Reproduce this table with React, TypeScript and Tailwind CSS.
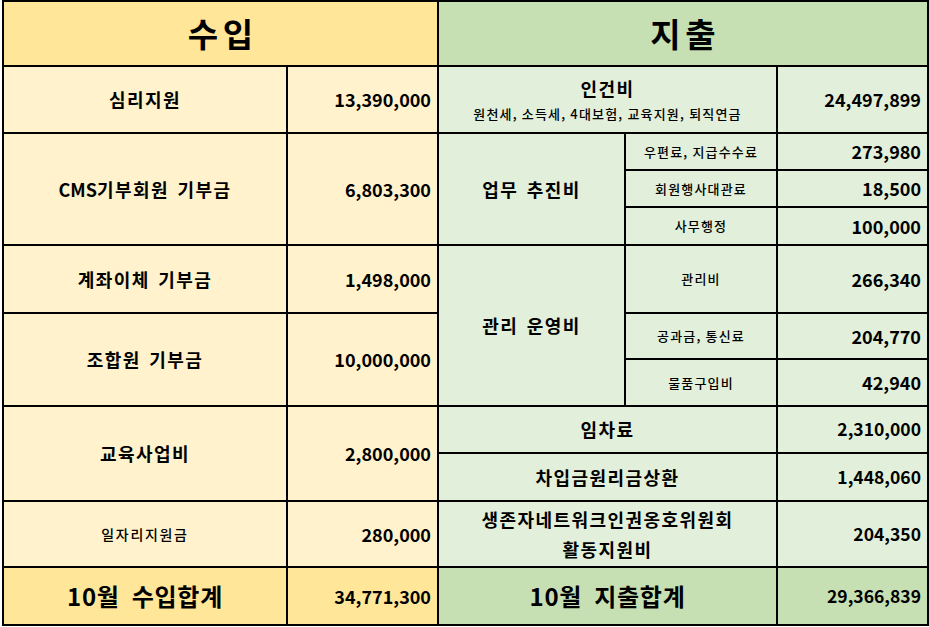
const Y_HEAD = 'bg-[#ffe699]';
const Y_BODY = 'bg-[#fff2cc]';
const G_HEAD = 'bg-[#c6e0b4]';
const G_BODY = 'bg-[#e2efda]';

const LABEL = 'text-[18px] font-bold tracking-[0.08em] [word-spacing:3px]';
const NUM = 'text-[18px] font-bold';
const SMALL = 'text-[13px] font-medium tracking-[0.09em]';

function Cell({
  className,
  children,
  right = false,
}: {
  className: string;
  children?: React.ReactNode;
  right?: boolean;
}) {
  return (
    <div
      className={`flex items-center ${right ? 'justify-end pr-[6px]' : 'justify-center'} text-black ${className}`}
    >
      {children}
    </div>
  );
}

export default function App() {
  return (
    <div className="w-[929px] h-[627px] bg-white">
      <div
        className="ml-[2px] w-[927px] bg-black p-[2px] grid gap-[2px] grid-cols-[282px_149px_185px_150px_149px] grid-rows-[63px_65px_35px_35px_36px_66px_44px_45px_45px_46px_64px_56px]"
        style={{ fontFamily: '"Noto Sans CJK KR", "Noto Sans", sans-serif' }}
      >
        {/* headers */}
        <Cell className={`${Y_HEAD} col-start-1 col-span-2 row-start-1 text-[33px] font-bold tracking-[0.14em] pl-[0.14em]`}>수입</Cell>
        <Cell className={`${G_HEAD} col-start-3 col-span-3 row-start-1 text-[33px] font-bold tracking-[0.14em] pl-[0.14em]`}>지출</Cell>

        {/* income */}
        <Cell className={`${Y_BODY} col-start-1 row-start-2 ${LABEL}`}>심리지원</Cell>
        <Cell right className={`${Y_BODY} col-start-2 row-start-2 ${NUM}`}>13,390,000</Cell>
        <Cell className={`${Y_BODY} col-start-1 row-start-3 row-span-3 ${LABEL}`}>
          <span className="tracking-normal">CMS</span>기부회원 기부금
        </Cell>
        <Cell right className={`${Y_BODY} col-start-2 row-start-3 row-span-3 ${NUM}`}>6,803,300</Cell>
        <Cell className={`${Y_BODY} col-start-1 row-start-6 ${LABEL}`}>계좌이체 기부금</Cell>
        <Cell right className={`${Y_BODY} col-start-2 row-start-6 ${NUM}`}>1,498,000</Cell>
        <Cell className={`${Y_BODY} col-start-1 row-start-7 row-span-2 ${LABEL}`}>조합원 기부금</Cell>
        <Cell right className={`${Y_BODY} col-start-2 row-start-7 row-span-2 ${NUM}`}>10,000,000</Cell>
        <Cell className={`${Y_BODY} col-start-1 row-start-9 row-span-2 ${LABEL}`}>교육사업비</Cell>
        <Cell right className={`${Y_BODY} col-start-2 row-start-9 row-span-2 ${NUM}`}>2,800,000</Cell>
        <Cell className={`${Y_BODY} col-start-1 row-start-11 text-[14px] font-medium tracking-[0.12em]`}>일자리지원금</Cell>
        <Cell right className={`${Y_BODY} col-start-2 row-start-11 ${NUM}`}>280,000</Cell>
        <Cell className={`${Y_HEAD} col-start-1 row-start-12 text-[24px] font-bold tracking-[0.03em] [word-spacing:6px]`}>10월 수입합계</Cell>
        <Cell right className={`${Y_HEAD} col-start-2 row-start-12 text-[18px] font-semibold`}>34,771,300</Cell>

        {/* expenses */}
        <div className={`${G_BODY} col-start-3 col-span-2 row-start-2 flex flex-col items-center justify-center text-black pt-[1px]`}>
          <span className={`${LABEL} leading-[27px]`}>인건비</span>
          <span className={`${SMALL} leading-[24px]`}>원천세, 소득세, 4대보험, 교육지원, 퇴직연금</span>
        </div>
        <Cell right className={`${G_BODY} col-start-5 row-start-2 ${NUM}`}>24,497,899</Cell>

        <Cell className={`${G_BODY} col-start-3 row-start-3 row-span-3 ${LABEL}`}>업무 추진비</Cell>
        <Cell className={`${G_BODY} col-start-4 row-start-3 ${SMALL}`}>우편료, 지급수수료</Cell>
        <Cell right className={`${G_BODY} col-start-5 row-start-3 ${NUM}`}>273,980</Cell>
        <Cell className={`${G_BODY} col-start-4 row-start-4 ${SMALL}`}>회원행사대관료</Cell>
        <Cell right className={`${G_BODY} col-start-5 row-start-4 ${NUM}`}>18,500</Cell>
        <Cell className={`${G_BODY} col-start-4 row-start-5 ${SMALL}`}>사무행정</Cell>
        <Cell right className={`${G_BODY} col-start-5 row-start-5 ${NUM}`}>100,000</Cell>

        <Cell className={`${G_BODY} col-start-3 row-start-6 row-span-3 ${LABEL}`}>관리 운영비</Cell>
        <Cell className={`${G_BODY} col-start-4 row-start-6 ${SMALL}`}>관리비</Cell>
        <Cell right className={`${G_BODY} col-start-5 row-start-6 ${NUM}`}>266,340</Cell>
        <Cell className={`${G_BODY} col-start-4 row-start-7 ${SMALL}`}>공과금, 통신료</Cell>
        <Cell right className={`${G_BODY} col-start-5 row-start-7 ${NUM}`}>204,770</Cell>
        <Cell className={`${G_BODY} col-start-4 row-start-8 ${SMALL}`}>물품구입비</Cell>
        <Cell right className={`${G_BODY} col-start-5 row-start-8 ${NUM}`}>42,940</Cell>

        <Cell className={`${G_BODY} col-start-3 col-span-2 row-start-9 ${LABEL}`}>임차료</Cell>
        <Cell right className={`${G_BODY} col-start-5 row-start-9 text-[17.5px] font-semibold`}>2,310,000</Cell>
        <Cell className={`${G_BODY} col-start-3 col-span-2 row-start-10 ${LABEL}`}>차입금원리금상환</Cell>
        <Cell right className={`${G_BODY} col-start-5 row-start-10 text-[17.5px] font-semibold`}>1,448,060</Cell>
        <div className={`${G_BODY} col-start-3 col-span-2 row-start-11 flex flex-col items-center justify-center text-black ${LABEL} leading-[30px]`}>
          <span>생존자네트워크인권옹호위원회</span>
          <span>활동지원비</span>
        </div>
        <Cell right className={`${G_BODY} col-start-5 row-start-11 text-[17.5px] font-semibold`}>204,350</Cell>

        <Cell className={`${G_HEAD} col-start-3 col-span-2 row-start-12 text-[24px] font-bold tracking-[0.03em] [word-spacing:6px]`}>10월 지출합계</Cell>
        <Cell right className={`${G_HEAD} col-start-5 row-start-12 text-[17.5px] font-semibold`}>29,366,839</Cell>
      </div>
    </div>
  );
}
